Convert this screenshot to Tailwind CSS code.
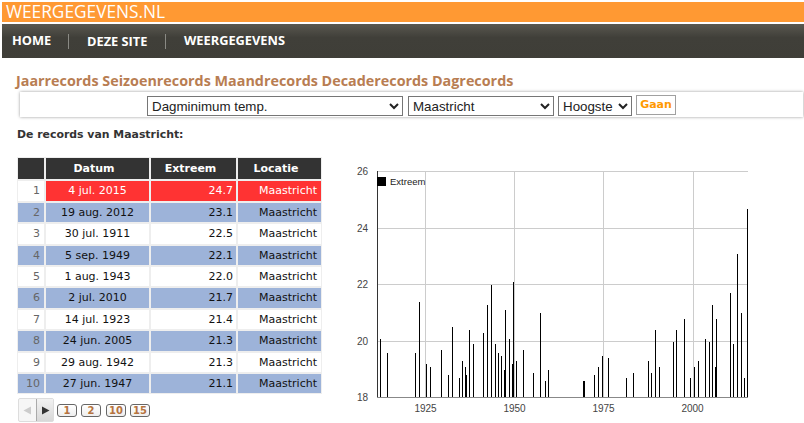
<!DOCTYPE html>
<html lang="en">
<head>
    <meta charset="UTF-8">
    <meta name="viewport" content="width=device-width, initial-scale=1.0">
    <title>Weergegevens.nl</title>
    <script src="https://cdn.jsdelivr.net/npm/@tailwindcss/browser@4"></script>
</head>
<body class="bg-white overflow-hidden font-['Open_Sans',sans-serif]">
    <header class="pl-[2px] pt-[2px]">
        <div class="bg-[#ff9933] h-[20px] pl-[4px] text-white text-[17.3px] leading-[20px]">WEERGEGEVENS.NL</div>
        <nav class="mt-[2px] h-[34px] bg-linear-to-b from-[#5a5850] via-[#403f39] via-40% to-[#3f3e38] flex items-center text-white font-bold text-[12.8px]">
            <a class="pl-[10px] w-[66px]">HOME</a>
            <span class="w-px h-[15px] bg-[#8a8a84]"></span>
            <a class="pl-[18px] w-[96px] pt-[2px]">DEZE SITE</a>
            <span class="w-px h-[15px] bg-[#8a8a84]"></span>
            <a class="pl-[18px]">WEERGEGEVENS</a>
        </nav>
    </header>

    <h1 class="mt-[13px] pl-[16px] text-[14.35px] leading-[20px] font-bold text-[#b87d52]">
        <a>Jaarrecords</a> <a>Seizoenrecords</a> <a>Maandrecords</a> <a>Decaderecords</a> <a>Dagrecords</a>
    </h1>

    <form class="ml-[20px] mt-[1px] w-[783px] h-[25px] bg-white shadow-[0_0_3px_#999] flex items-start gap-[4px] pt-[4px] pl-[127px] font-['Liberation_Sans',sans-serif] text-[13.33px] text-[#222]">
        <select class="w-[256px] h-[20px] border border-[#767676]"><option>Dagminimum temp.</option></select>
        <select class="ml-[1px] w-[146px] h-[20px] border border-[#767676]"><option>Maastricht</option></select>
        <select class="w-[74px] h-[20px] border border-[#767676]"><option>Hoogste</option></select>
        <button type="button" class="w-[40px] h-[20px] -mt-[1px] border border-[#a0a0a0] text-[#ff9900] font-bold text-[11px] font-['DejaVu_Sans',sans-serif]">Gaan</button>
    </form>

    <p class="mt-[11px] pl-[17px] text-[10.9px] leading-[14px] font-bold text-[#333] font-['DejaVu_Sans',sans-serif]">De records van Maastricht:</p>

    <div class="flex mt-[15px] items-start">
        <div class="ml-[17px] w-[305px] shrink-0 font-['DejaVu_Sans',sans-serif] text-[11px] text-[#111]">
            <div class="w-[305px] h-[237px] overflow-hidden bg-[#eeeeee]">
                <table class="w-[307px] -m-[1px] table-fixed border-separate border-spacing-[2px]">
                    <thead>
                        <tr class="h-[21px] bg-[#333333] text-white font-bold">
                            <th class="w-[26px]"></th><th class="w-[103px] pr-[7px] pt-[1px]">Datum</th><th class="w-[85px] pr-[6px] pt-[1px]">Extreem</th><th class="pr-[7px] pt-[1px]">Locatie</th>
                        </tr>
                    </thead>
                    <tbody class="[&_td]:pt-[1px]">
                        <tr class="h-[20px]"><td class="bg-white text-right pr-[4px] text-[#666]">1</td><td class="bg-[#ff3333] text-white text-center">4 jul. 2015</td><td class="bg-[#ff3333] text-white text-right pr-[3px]">24.7</td><td class="bg-[#ff3333] text-white text-right pr-[4px]">Maastricht</td></tr>
                        <tr class="h-[19px] bg-[#9db3d9]"><td class="text-right pr-[4px] text-[#666]">2</td><td class="text-center">19 aug. 2012</td><td class="text-right pr-[3px]">23.1</td><td class="text-right pr-[4px]">Maastricht</td></tr>
                        <tr class="h-[20px] bg-white"><td class="text-right pr-[4px] text-[#666]">3</td><td class="text-center">30 jul. 1911</td><td class="text-right pr-[3px]">22.5</td><td class="text-right pr-[4px]">Maastricht</td></tr>
                        <tr class="h-[19px] bg-[#9db3d9]"><td class="text-right pr-[4px] text-[#666]">4</td><td class="text-center">5 sep. 1949</td><td class="text-right pr-[3px]">22.1</td><td class="text-right pr-[4px]">Maastricht</td></tr>
                        <tr class="h-[19px] bg-white"><td class="text-right pr-[4px] text-[#666]">5</td><td class="text-center">1 aug. 1943</td><td class="text-right pr-[3px]">22.0</td><td class="text-right pr-[4px]">Maastricht</td></tr>
                        <tr class="h-[20px] bg-[#9db3d9]"><td class="text-right pr-[4px] text-[#666]">6</td><td class="text-center">2 jul. 2010</td><td class="text-right pr-[3px]">21.7</td><td class="text-right pr-[4px]">Maastricht</td></tr>
                        <tr class="h-[19px] bg-white"><td class="text-right pr-[4px] text-[#666]">7</td><td class="text-center">14 jul. 1923</td><td class="text-right pr-[3px]">21.4</td><td class="text-right pr-[4px]">Maastricht</td></tr>
                        <tr class="h-[20px] bg-[#9db3d9]"><td class="text-right pr-[4px] text-[#666]">8</td><td class="text-center">24 jun. 2005</td><td class="text-right pr-[3px]">21.3</td><td class="text-right pr-[4px]">Maastricht</td></tr>
                        <tr class="h-[19px] bg-white"><td class="text-right pr-[4px] text-[#666]">9</td><td class="text-center">29 aug. 1942</td><td class="text-right pr-[3px]">21.3</td><td class="text-right pr-[4px]">Maastricht</td></tr>
                        <tr class="h-[19px] bg-[#9db3d9]"><td class="text-right pr-[4px] text-[#666]">10</td><td class="text-center">27 jun. 1947</td><td class="text-right pr-[3px]">21.1</td><td class="text-right pr-[4px]">Maastricht</td></tr>
                    </tbody>
                </table>
            </div>

            <div class="flex items-center mt-[4px] ml-[1px]">
                <div class="flex w-[36px] h-[24px] border border-[#ddd] rounded-[2px] bg-[#f6f6f6]">
                    <span class="w-[17px] flex items-center justify-center"><svg width="9" height="9" viewBox="0 0 9 9"><path d="M8 0.5V8.5L0.5 4.5Z" fill="#cccccc"/></svg></span>
                    <span class="flex-1 border-l border-[#aaa] bg-linear-to-b from-[#f2f2f2] to-[#d8d8d8] flex items-center justify-center"><svg width="9" height="9" viewBox="0 0 9 9"><path d="M1 0.5V8.5L8.5 4.5Z" fill="#333333"/></svg></span>
                </div>
                <div class="flex ml-[3px] gap-[4px] text-[10px] leading-[11px] font-bold text-[#b5733f]">
                    <a class="w-[20px] h-[13px] text-center border border-[#666] rounded-[3px] bg-linear-to-b from-white to-[#eeeeee]">1</a>
                    <a class="w-[20px] h-[13px] text-center border border-[#666] rounded-[3px] bg-linear-to-b from-white to-[#eeeeee]">2</a>
                    <a class="ml-[1px] w-[20px] h-[13px] text-center border border-[#666] rounded-[3px] bg-linear-to-b from-white to-[#eeeeee]">10</a>
                    <a class="w-[20px] h-[13px] text-center border border-[#666] rounded-[3px] bg-linear-to-b from-white to-[#eeeeee]">15</a>
                </div>
            </div>
        </div>

        <svg class="ml-[23px] -mt-[1px] shrink-0" width="459" height="267" viewBox="345 156 459 267" font-family="Liberation Sans, Arial, sans-serif" font-size="10" fill="#444444">
            <path d="M378 171.5H748M378 228.5H748M378 284.5H748M378 341.5H748M425.5 171V397M514.5 171V397M603.5 171V397M693.5 171V397" stroke="#cccccc" fill="none"/>
            <path d="M380.5 339V397M387.5 353V397M415.5 353V397M419.5 302V397M426.5 364V397M430.5 367V397M441.5 350V397M448.5 375V397M452.5 327V397M459.5 378V397M462.5 361V397M465.5 367V397M466.5 375V397M469.5 330V397M473.5 344V397M483.5 333V397M487.5 305V397M491.5 285V397M495.5 344V397M498.5 353V397M501.5 356V397M504.5 370V397M505.5 310V397M509.5 339V397M512.5 364V397M513.5 282V397M516.5 361V397M523.5 350V397M533.5 373V397M540.5 313V397M545.5 381V397M548.5 370V397M583.5 381V397M584.5 381V397M594.5 375V397M598.5 367V397M602.5 356V397M608.5 358V397M626.5 378V397M633.5 373V397M648.5 361V397M651.5 373V397M655.5 330V397M659.5 367V397M673.5 342V397M676.5 330V397M684.5 319V397M690.5 378V397M694.5 367V397M698.5 361V397M705.5 339V397M709.5 342V397M712.5 305V397M715.5 367V397M716.5 319V397M730.5 293V397M733.5 344V397M737.5 254V397M741.5 313V397M744.5 378V397M747.5 209V397" stroke="#000000" fill="none"/>
            <path d="M377.5 171V397" stroke="#333333" fill="none"/>
            <path d="M377 397.5H748" stroke="#888888" fill="none"/>
            <rect x="377" y="177" width="9" height="9" fill="#000000"/>
            <text x="390" y="185" fill="#222222" font-size="9.5">Extreem</text>
            <text x="368" y="175" text-anchor="end">26</text>
            <text x="368" y="231.500" text-anchor="end">24</text>
            <text x="368" y="288" text-anchor="end">22</text>
            <text x="368" y="344.500" text-anchor="end">20</text>
            <text x="368" y="401" text-anchor="end">18</text>
            <text x="425.500" y="412" text-anchor="middle">1925</text>
            <text x="514.500" y="412" text-anchor="middle">1950</text>
            <text x="603.500" y="412" text-anchor="middle">1975</text>
            <text x="692.500" y="412" text-anchor="middle">2000</text>
        </svg>
    </div>
</body>
</html>
